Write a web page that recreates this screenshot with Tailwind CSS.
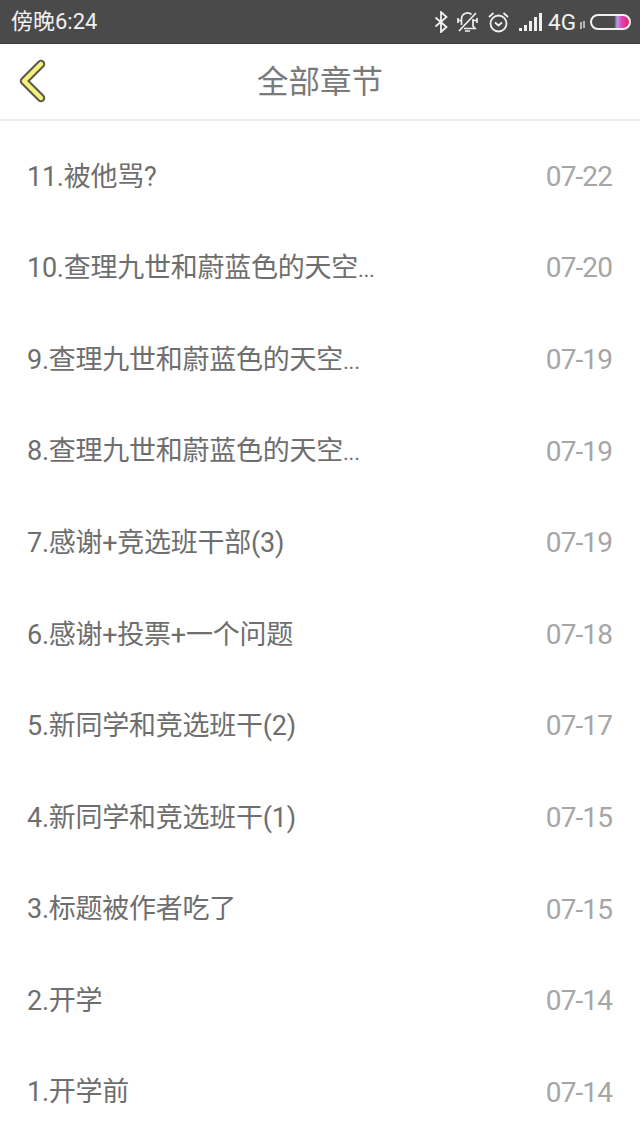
<!DOCTYPE html>
<html lang="zh">
<head>
    <meta charset="UTF-8">
    <meta name="viewport" content="width=device-width, initial-scale=1.0">
    <title>全部章节</title>
    <script src="https://cdn.jsdelivr.net/npm/@tailwindcss/browser@4"></script>
</head>
<body class="bg-white h-[1138px] w-[640px] overflow-hidden font-[Roboto,'Noto_Sans_CJK_SC',sans-serif]">
    <!-- status bar -->
    <div class="h-[44px] bg-[#4a4a4a] border-b border-[#3c3c3c] flex items-center justify-between pl-[11px] pr-[9px] text-[#f0f0f0]">
        <span class="text-[22px] leading-none">傍晚6:24</span>
        <div class="flex items-center">
            <svg class="w-[16px] h-[22px]" viewBox="0 0 16 22" fill="none" stroke="#f0f0f0" stroke-width="1.8"><path d="M2.500 6.500l11 9.500-5.500 5V1l5.500 5-11 9.500"/></svg>
            <svg class="w-[21px] h-[22px] ml-[8px]" viewBox="0 0 21 22" fill="none" stroke="#f0f0f0" stroke-width="1.700"><path d="M4.500 14V8a6 6 0 0 1 10-4.500M16 8v7l2 2.500H7"/><path d="M1 7v5M20 7v5M1.500 9.500h3M16 9.500h3.500M8 20h5M2 20L19 2"/></svg>
            <svg class="w-[21px] h-[22px] ml-[10px]" viewBox="0 0 21 22" fill="none" stroke="#f0f0f0" stroke-width="1.800"><circle cx="10.500" cy="12.500" r="8"/><path d="M7 11.500l3.500 3 3.500-3M1 6l4.500-4M20 6l-4.500-4"/></svg>
            <div class="flex items-end gap-[2px] h-[18px] w-[24px] ml-[10px]">
                <div class="w-[3px] h-[3px] bg-[#f0f0f0]"></div>
                <div class="w-[3px] h-[6px] bg-[#f0f0f0]"></div>
                <div class="w-[3px] h-[10px] bg-[#f0f0f0]"></div>
                <div class="w-[3px] h-[14px] bg-[#f0f0f0]"></div>
                <div class="w-[3px] h-[18px] bg-[#f0f0f0]"></div>
            </div>
            <span class="text-[22.5px] leading-none w-[29px] ml-[5px] mt-[1px]">4G</span>
            <svg class="w-[7px] h-[8px] ml-[2px] mr-[4px] mt-[6px]" viewBox="0 0 7 8" stroke="#f0f0f0" stroke-width="1.300"><path d="M2 1v7M5 0v7"/></svg>
            <div class="w-[41px] h-[16px] rounded-full border-2 border-[#f0f0f0] bg-[linear-gradient(to_right,#4a4a4a_60%,#b7a0e8_68%,#e040c0_80%,#f0205a_100%)]"></div>
        </div>
    </div>

    <!-- title bar -->
    <header class="relative h-[77px] border-b-2 border-[#eeeeee] flex items-center justify-center pt-[2px]">
        <svg class="absolute left-[17px] top-[14px] w-[32px] h-[48px]" viewBox="0 0 32 48" fill="none" stroke-linecap="round" stroke-linejoin="round">
            <path d="M24 6L7 23L24 40" stroke="#5a5a4c" stroke-width="8.500"/>
            <path d="M24 6L7 23L24 40" stroke="#f7f07c" stroke-width="4.500"/>
        </svg>
        <h1 class="text-[31.5px] text-[#7a7a7a] leading-none">全部章节</h1>
    </header>

    <!-- chapter list -->
    <ul class="pt-[10px] pl-[27px] pr-[28px] text-[27px] tracking-[-0.25px] text-[#6e6e6e]">
        <li class="h-[91.6px] flex items-center justify-between"><span>11.被他骂?</span><span class="text-[28px] tracking-[-0.9px] text-[#a6a6a6]">07-22</span></li>
        <li class="h-[91.6px] flex items-center justify-between"><span>10.查理九世和蔚蓝色的天空<span class="text-[22px]">...</span></span><span class="text-[28px] tracking-[-0.9px] text-[#a6a6a6]">07-20</span></li>
        <li class="h-[91.6px] flex items-center justify-between"><span>9.查理九世和蔚蓝色的天空<span class="text-[22px]">...</span></span><span class="text-[28px] tracking-[-0.9px] text-[#a6a6a6]">07-19</span></li>
        <li class="h-[91.6px] flex items-center justify-between"><span>8.查理九世和蔚蓝色的天空<span class="text-[22px]">...</span></span><span class="text-[28px] tracking-[-0.9px] text-[#a6a6a6]">07-19</span></li>
        <li class="h-[91.6px] flex items-center justify-between"><span>7.感谢+竞选班干部(3)</span><span class="text-[28px] tracking-[-0.9px] text-[#a6a6a6]">07-19</span></li>
        <li class="h-[91.6px] flex items-center justify-between"><span>6.感谢+投票+一个问题</span><span class="text-[28px] tracking-[-0.9px] text-[#a6a6a6]">07-18</span></li>
        <li class="h-[91.6px] flex items-center justify-between"><span>5.新同学和竞选班干(2)</span><span class="text-[28px] tracking-[-0.9px] text-[#a6a6a6]">07-17</span></li>
        <li class="h-[91.6px] flex items-center justify-between"><span>4.新同学和竞选班干(1)</span><span class="text-[28px] tracking-[-0.9px] text-[#a6a6a6]">07-15</span></li>
        <li class="h-[91.6px] flex items-center justify-between"><span>3.标题被作者吃了</span><span class="text-[28px] tracking-[-0.9px] text-[#a6a6a6]">07-15</span></li>
        <li class="h-[91.6px] flex items-center justify-between"><span>2.开学</span><span class="text-[28px] tracking-[-0.9px] text-[#a6a6a6]">07-14</span></li>
        <li class="h-[91.6px] flex items-center justify-between"><span>1.开学前</span><span class="text-[28px] tracking-[-0.9px] text-[#a6a6a6]">07-14</span></li>
    </ul>
</body>
</html>
